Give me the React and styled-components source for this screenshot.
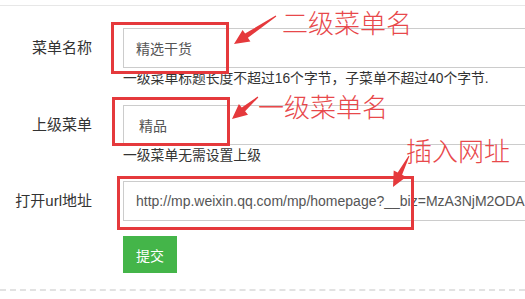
import React from "react";
import styled, { createGlobalStyle } from "styled-components";

const GlobalStyle = createGlobalStyle`
    html, body {
        margin: 0;
        padding: 0;
        background: #ffffff;
        overflow: hidden;
    }
    body {
        font-family: "Liberation Sans", "Noto Sans CJK SC", sans-serif;
        color: #333333;
    }
`;

const SPage = styled.div`
    position: relative;
    width: 525px;
    height: 299px;
    padding-top: 5px;
    box-sizing: border-box;
    overflow: hidden;
`;

const SRule = styled.div`
    border-top: 1px solid #e7e7e7;
`;

const SForm = styled.form`
    padding-top: 22px;
    display: flex;
    flex-direction: column;
`;

const SGroup = styled.div`
    display: grid;
    grid-template-columns: 92px 1fr;
    column-gap: 31px;
    margin-bottom: ${(p) => p.$gap || 0}px;
`;

const SLabel = styled.label`
    height: 40px;
    line-height: 40px;
    text-align: right;
    font-size: 15px;
    color: #333333;
    white-space: nowrap;
`;

const SControl = styled.div`
    display: flex;
    flex-direction: column;
    min-width: 0;
`;

const SInput = styled.div`
    width: 440px;
    height: 40px;
    box-sizing: border-box;
    border: 1px solid #cccccc;
    padding-left: ${(p) => p.$indent || 12}px;
    display: flex;
    align-items: center;
    font-size: 14px;
    color: #555555;
    white-space: nowrap;
    overflow: hidden;
`;

const SHelp = styled.p`
    margin: 2px 0 0;
    font-size: 13.8px;
    line-height: 18px;
    color: #333333;
    white-space: nowrap;
`;

const SButton = styled.button`
    width: 54px;
    height: 37px;
    border: none;
    border-radius: 0;
    background: #44b549;
    color: #ffffff;
    font-family: "Noto Sans CJK SC", sans-serif;
    font-size: 14px;
    padding: 0;
`;

const SDashed = styled.div`
    margin-top: 16px;
    width: 525px;
    border-top: 2px dashed #e2e2e2;
`;

/* anotações em vermelho por cima do formulário */
const SMark = styled.div`
    position: absolute;
    left: ${(p) => p.$x}px;
    top: ${(p) => p.$y}px;
    width: ${(p) => p.$w}px;
    height: ${(p) => p.$h}px;
    box-sizing: border-box;
    border: 3px solid #e5393c;
`;

const SNote = styled.span`
    position: absolute;
    left: ${(p) => p.$x}px;
    top: ${(p) => p.$y}px;
    font-family: "Noto Sans CJK SC", sans-serif;
    font-weight: 300;
    font-size: 26px;
    line-height: 26px;
    color: #e8484b;
    white-space: nowrap;
`;

const SArrows = styled.svg`
    position: absolute;
    left: 0;
    top: 0;
    width: 525px;
    height: 299px;
    pointer-events: none;
`;

function arrowPoints([tx, ty], [hx, hy]) {
    const dx = hx - tx;
    const dy = hy - ty;
    const len = Math.hypot(dx, dy);
    const ux = dx / len;
    const uy = dy / len;
    const nx = -uy;
    const ny = ux;
    const headLen = 15;
    const bx = hx - ux * headLen;
    const by = hy - uy * headLen;
    const pts = [
        [tx + nx * 0.5, ty + ny * 0.5],
        [bx + nx * 2.5, by + ny * 2.5],
        [bx + nx * 7, by + ny * 7],
        [hx, hy],
        [bx - nx * 7, by - ny * 7],
        [bx - nx * 2.5, by - ny * 2.5],
        [tx - nx * 0.5, ty - ny * 0.5],
    ];
    return pts.map((p) => p.map((v) => v.toFixed(1)).join(",")).join(" ");
}

const arrows = [
    { from: [276, 16], to: [234, 44] },
    { from: [258, 97], to: [232, 119] },
    { from: [409, 156], to: [393, 187] },
];

export default function App() {
    return (
        <>
            <GlobalStyle />
            <SPage>
                <SRule />
                <SForm>
                    <SGroup $gap={17}>
                        <SLabel>菜单名称</SLabel>
                        <SControl>
                            <SInput>精选干货</SInput>
                            <SHelp>一级菜单标题长度不超过16个字节，子菜单不超过40个字节.</SHelp>
                        </SControl>
                    </SGroup>
                    <SGroup $gap={16}>
                        <SLabel>上级菜单</SLabel>
                        <SControl>
                            <SInput $indent={15}>精品</SInput>
                            <SHelp>一级菜单无需设置上级</SHelp>
                        </SControl>
                    </SGroup>
                    <SGroup $gap={15}>
                        <SLabel>打开url地址</SLabel>
                        <SControl>
                            <SInput>http://mp.weixin.qq.com/mp/homepage?__biz=MzA3NjM2ODA</SInput>
                        </SControl>
                    </SGroup>
                    <SGroup>
                        <span />
                        <SControl>
                            <SButton type="button">提交</SButton>
                        </SControl>
                    </SGroup>
                </SForm>
                <SDashed />

                <SMark $x={111} $y={22} $w={118} $h={52} />
                <SMark $x={112} $y={97} $w={118} $h={49} />
                <SMark $x={117} $y={176} $w={297} $h={54} />

                <SNote $x={282} $y={9}>二级菜单名</SNote>
                <SNote $x={258} $y={93}>一级菜单名</SNote>
                <SNote $x={406} $y={137}>插入网址</SNote>

                <SArrows viewBox="0 0 525 299">
                    {arrows.map((a, i) => (
                        <polygon key={i} points={arrowPoints(a.from, a.to)} fill="#e5393c" />
                    ))}
                </SArrows>
            </SPage>
        </>
    );
}
